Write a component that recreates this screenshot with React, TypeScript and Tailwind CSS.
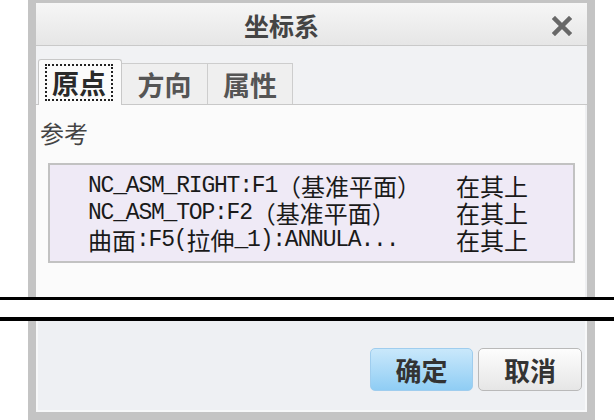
import React from "react";

const cjk = { fontFamily: '"Noto Sans CJK SC", "Noto Sans", sans-serif' };
const mono = { fontFamily: '"Liberation Mono", "Noto Sans CJK SC", monospace' };

type Part = { text: string; latin?: boolean };

const rows: { parts: Part[]; state: string }[] = [
  { parts: [{ text: "NC_ASM_RIGHT:F1", latin: true }, { text: "（基准平面）" }], state: "在其上" },
  { parts: [{ text: "NC_ASM_TOP:F2", latin: true }, { text: "（基准平面）" }], state: "在其上" },
  {
    parts: [
      { text: "曲面" },
      { text: ":F5(", latin: true },
      { text: "拉伸" },
      { text: "_1):ANNULA...", latin: true },
    ],
    state: "在其上",
  },
];

const CloseIcon = () => (
  <svg width="20" height="20" viewBox="0 0 20 20">
    <path d="M3 3 L17 17 M17 3 L3 17" stroke="#686868" strokeWidth="4.5" strokeLinecap="square" />
  </svg>
);

const RefRow: React.FC<{ parts: Part[]; state: string }> = ({ parts, state }) => (
  <div className="flex h-[27px] items-center text-[#1a1a1a]">
    <div className="flex w-[368px] items-center whitespace-nowrap">
      {parts.map((p, i) =>
        p.latin ? (
          <span key={i} className="text-[23px] leading-[26px] tracking-[-1.2px]" style={mono}>
            {p.text}
          </span>
        ) : (
          <span key={i} className="text-[24px] leading-[26px]" style={cjk}>
            {p.text}
          </span>
        )
      )}
    </div>
    <span className="text-[24px] leading-[26px]" style={cjk}>
      {state}
    </span>
  </div>
);

export default function App() {
  return (
    <div className="flex h-[420px] w-[614px] flex-col overflow-hidden bg-white" style={cjk}>
      {/* upper part of the dialog */}
      <div className="ml-[28px] flex h-[297px] w-[567px] flex-col border-x-[8px] border-t-[3px] border-x-[#c4c4c4] border-t-[#c4c4c4] bg-[#eff0f2]">
        <div className="flex h-[43px] shrink-0 items-center border-b border-[#c9c9c9] bg-gradient-to-b from-[#f6f6f6] to-[#e6e6e6] pt-[3px]">
          <div className="flex-1 text-center text-[25px] font-bold leading-none text-[#444]">坐标系</div>
          <div className="flex w-[60px] justify-center pl-[10px]">
            <CloseIcon />
          </div>
        </div>
        <div className="h-[14px] shrink-0 bg-[#f1f2f4]" />
        <div className="flex h-[45px] shrink-0 items-end border-b border-[#c8c8c8] bg-[#f1f2f4] pl-[2px]">
          <div className="relative z-10 -mb-px flex h-[46px] w-[84px] items-center justify-start rounded-t-[3px] border border-b-0 border-[#c8c8c8] bg-[#fbfbfb] pl-[6px]">
            <div className="flex h-[37px] w-[68px] items-center justify-center border-2 border-dotted border-[#222] text-[27px] font-bold leading-none text-[#2a2a2a]">
              原点
            </div>
          </div>
          <div className="flex h-[41px] w-[86px] items-center justify-center border-t border-r border-[#cdcdcd] bg-[#efefef] text-[27px] font-bold leading-none text-[#555]">
            方向
          </div>
          <div className="flex h-[41px] w-[85px] items-center justify-center border-t border-r border-[#cdcdcd] bg-[#efefef] text-[27px] font-bold leading-none text-[#555]">
            属性
          </div>
        </div>
        <div className="mr-[2px] flex flex-1 flex-col bg-[#fbfbfb] pl-[4px]">
          <div className="mt-[16px] text-[24px] leading-none text-[#444]">参考</div>
          <div className="ml-[8px] mt-[18px] h-[100px] w-[527px] border-2 border-[#c2c2c2] bg-[#efeaf6] pl-[38px] pt-[7px]">
            {rows.map((r, i) => (
              <RefRow key={i} parts={r.parts} state={r.state} />
            ))}
          </div>
        </div>
      </div>

      {/* cut marks */}
      <div className="h-[3px] w-full shrink-0 bg-black" />
      <div className="h-[17px] w-full shrink-0 bg-white" />
      <div className="h-[4px] w-full shrink-0 bg-black" />

      {/* lower part of the dialog */}
      <div className="ml-[28px] flex h-[99px] w-[567px] shrink-0 flex-col border-x-[8px] border-b-[8px] border-[#c4c4c4] bg-[#eef0f3]">
        <div className="flex flex-1 flex-col border-x-2 border-b-2 border-[#f7f8f9]">
          <div className="flex justify-end gap-[5px] pr-[3px] pt-[27px]">
            <button className="flex h-[43px] w-[103px] items-center justify-center rounded-[5px] border border-[#9fcdee] bg-gradient-to-b from-[#c9e8fb] to-[#8fcdf4] text-[26px] font-bold leading-none text-[#333]">
              确定
            </button>
            <button className="flex h-[43px] w-[104px] items-center justify-center rounded-[5px] border border-[#b9b9b9] bg-gradient-to-b from-[#fdfdfd] to-[#e6e6e6] text-[26px] font-bold leading-none text-[#333]">
              取消
            </button>
          </div>
        </div>
      </div>
    </div>
  );
}
